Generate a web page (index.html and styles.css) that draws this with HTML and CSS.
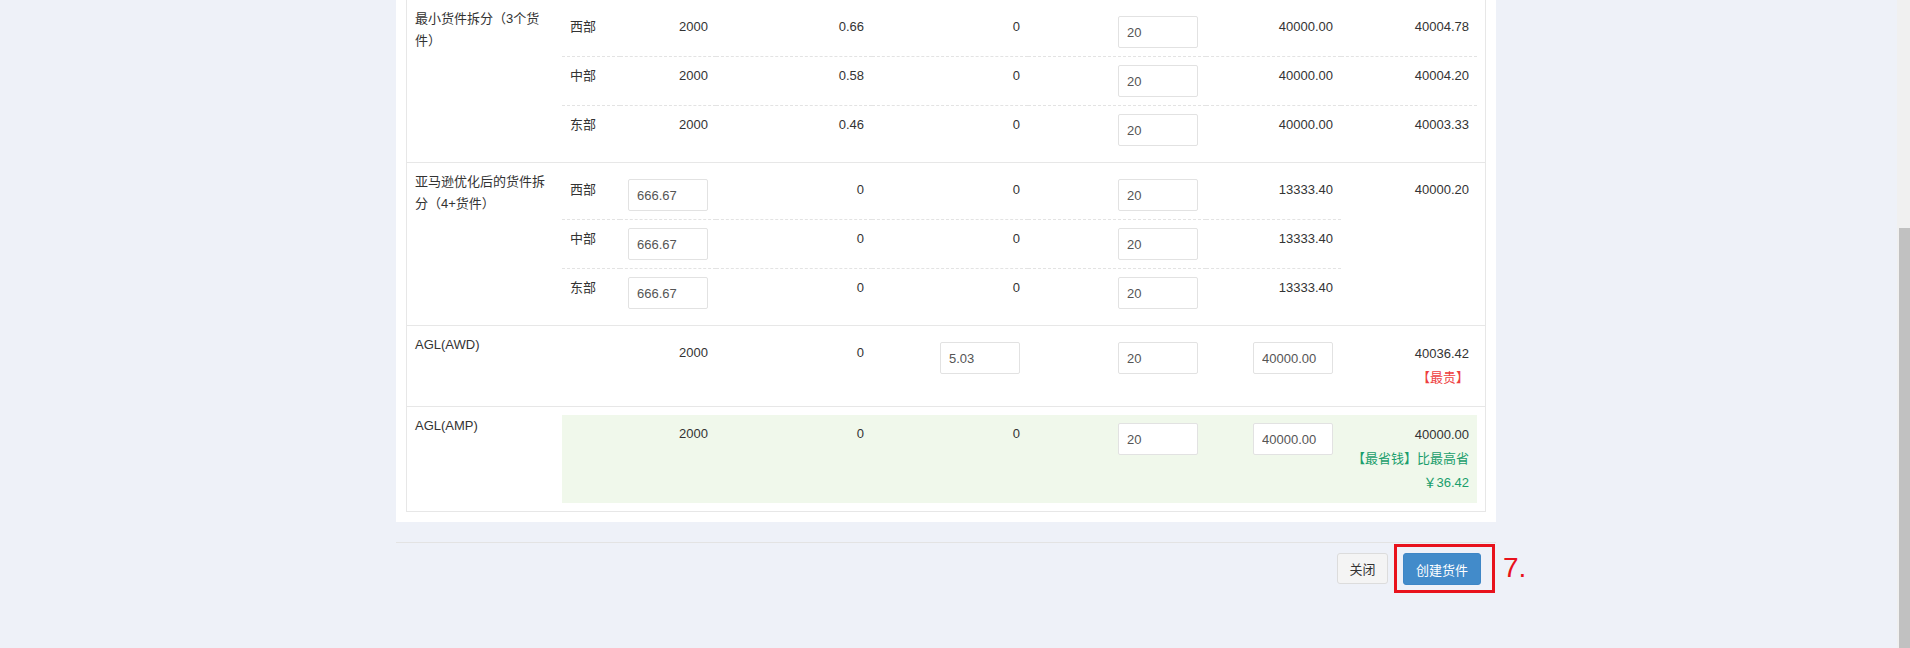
FILE: index.html
```html
<!DOCTYPE html>
<html lang="zh-CN">
<head>
<meta charset="utf-8">
<title>创建货件</title>
<link rel="stylesheet" href="styles.css">
</head>
<body>
<div class="page">
  <main class="main">
    <div class="modal">
      <div class="panel">
        <table class="plan">
          <colgroup><col class="col-name"><col></colgroup>
          <tbody>
            <tr>
              <td class="plan-name">最小货件拆分（3个货件）</td>
              <td class="plan-detail">
                <table class="split">
                  <colgroup><col class="c1"><col class="c2"><col class="c3"><col class="c4"><col class="c5"><col class="c6"><col class="c7"></colgroup>
                  <tbody>
                    <tr><td class="region">西部</td><td>2000</td><td>0.66</td><td>0</td><td><input class="field" value="20"></td><td>40000.00</td><td>40004.78</td></tr>
                    <tr><td class="region">中部</td><td>2000</td><td>0.58</td><td>0</td><td><input class="field" value="20"></td><td>40000.00</td><td>40004.20</td></tr>
                    <tr><td class="region">东部</td><td>2000</td><td>0.46</td><td>0</td><td><input class="field" value="20"></td><td>40000.00</td><td>40003.33</td></tr>
                  </tbody>
                </table>
              </td>
            </tr>
            <tr>
              <td class="plan-name">亚马逊优化后的货件拆分（4+货件）</td>
              <td class="plan-detail">
                <table class="split">
                  <colgroup><col class="c1"><col class="c2"><col class="c3"><col class="c4"><col class="c5"><col class="c6"><col class="c7"></colgroup>
                  <tbody>
                    <tr><td class="region">西部</td><td><input class="field" value="666.67"></td><td>0</td><td>0</td><td><input class="field" value="20"></td><td>13333.40</td><td rowspan="3">40000.20</td></tr>
                    <tr><td class="region">中部</td><td><input class="field" value="666.67"></td><td>0</td><td>0</td><td><input class="field" value="20"></td><td>13333.40</td></tr>
                    <tr><td class="region">东部</td><td><input class="field" value="666.67"></td><td>0</td><td>0</td><td><input class="field" value="20"></td><td>13333.40</td></tr>
                  </tbody>
                </table>
              </td>
            </tr>
            <tr>
              <td class="plan-name">AGL(AWD)</td>
              <td class="plan-detail">
                <table class="split">
                  <colgroup><col class="c1"><col class="c2"><col class="c3"><col class="c4"><col class="c5"><col class="c6"><col class="c7"></colgroup>
                  <tbody>
                    <tr><td class="region"></td><td>2000</td><td>0</td><td><input class="field" value="5.03"></td><td><input class="field" value="20"></td><td><input class="field" value="40000.00"></td><td class="total"><div>40036.42</div><div class="tag-red">【最贵】</div></td></tr>
                  </tbody>
                </table>
              </td>
            </tr>
            <tr>
              <td class="plan-name">AGL(AMP)</td>
              <td class="plan-detail">
                <table class="split best">
                  <colgroup><col class="c1"><col class="c2"><col class="c3"><col class="c4"><col class="c5"><col class="c6"><col class="c7"></colgroup>
                  <tbody>
                    <tr><td class="region"></td><td>2000</td><td>0</td><td>0</td><td><input class="field" value="20"></td><td><input class="field" value="40000.00"></td><td class="total"><div>40000.00</div><div class="tag-green">【最省钱】比最高省</div><div class="tag-green">￥36.42</div></td></tr>
                  </tbody>
                </table>
              </td>
            </tr>
          </tbody>
        </table>
      </div>
      <div class="footer">
        <button class="btn btn-default" type="button">关闭</button>
        <span class="mark">
          <button class="btn btn-primary" type="button">创建货件</button>
          <span class="mark-box"></span>
          <span class="mark-num">7.</span>
        </span>
      </div>
    </div>
  </main>
  <div class="scrollbar"><div class="scrollbar-thumb"></div></div>
</div>
</body>
</html>
```

FILE: styles.css
```css
* { box-sizing: border-box; }
html, body { margin: 0; padding: 0; }
body {
  background: #eef1f8;
  font-family: "Liberation Sans", "Noto Sans CJK SC", sans-serif;
  font-size: 13px;
  color: #333;
  overflow: hidden;
}
.page { display: flex; height: 648px; }
.main { flex: 1; min-width: 0; padding-left: 396px; overflow: hidden; }
.scrollbar {
  width: 13px;
  background: #f0f0f0;
  display: flex;
  flex-direction: column;
  padding-left: 2px;
  padding-top: 228px;
}
.scrollbar-thumb { flex: 1; background: #c1c1c1; }

.modal { width: 1100px; margin-top: -11px; }
.panel { background: #fff; padding: 10px; }

.plan {
  width: 100%;
  border-collapse: separate;
  border-spacing: 0;
  border: 1px solid #e7e7e7;
  table-layout: fixed;
}
.col-name { width: 147px; }
.plan > tbody > tr > td { padding: 8px; vertical-align: top; }
.plan > tbody > tr + tr > td { border-top: 1px solid #e7e7e7; }
.plan-name { line-height: 22px; }

.split {
  width: 100%;
  border-collapse: separate;
  border-spacing: 0;
  table-layout: fixed;
}
.split .c1 { width: 58px; }
.split .c2 { width: 96px; }
.split .c3 { width: 156px; }
.split .c4 { width: 156px; }
.split .c5 { width: 178px; }
.split .c6 { width: 135px; }
.split .c7 { width: 136px; }
.split td {
  padding: 8px;
  line-height: 22px;
  vertical-align: top;
  text-align: right;
  white-space: nowrap;
}
.split tr + tr td { border-top: 1px dashed #e3e3e3; }
.split td.region { text-align: left; }
.split.best { background: #f0f8eb; }
.split td.total { line-height: 24px; }
.tag-red { color: #ee3f3f; }
.tag-green { color: #1a9e6c; }

.field {
  display: inline-block;
  width: 80px;
  height: 32px;
  border: 1px solid #e2e2e2;
  border-radius: 2px;
  padding: 0 8px;
  font: inherit;
  color: #555;
  background: #fff;
  vertical-align: top;
  text-align: left;
}

.footer {
  margin-top: 20px;
  border-top: 1px solid #e3e3e3;
  padding: 10px 15px;
  display: flex;
  justify-content: flex-end;
  align-items: flex-start;
  gap: 15px;
}
.btn {
  font: inherit;
  padding: 0;
  border: 1px solid;
  border-radius: 3px;
  cursor: pointer;
}
.btn-default {
  width: 51px;
  height: 31px;
  background: #f4f4f4;
  border-color: #dcdcdc;
  color: #333;
}
.btn-primary {
  width: 78px;
  height: 32px;
  background: #428bca;
  border-color: #3e86c6;
  color: #fff;
}
.mark { position: relative; display: inline-flex; }
.mark-box {
  position: absolute;
  left: -9px;
  top: -9px;
  width: 101px;
  height: 49px;
  border: 3px solid #e8121c;
}
.mark-num {
  position: absolute;
  left: 100px;
  top: 1px;
  font-size: 28px;
  line-height: 28px;
  color: #e8121c;
  white-space: nowrap;
}
```
